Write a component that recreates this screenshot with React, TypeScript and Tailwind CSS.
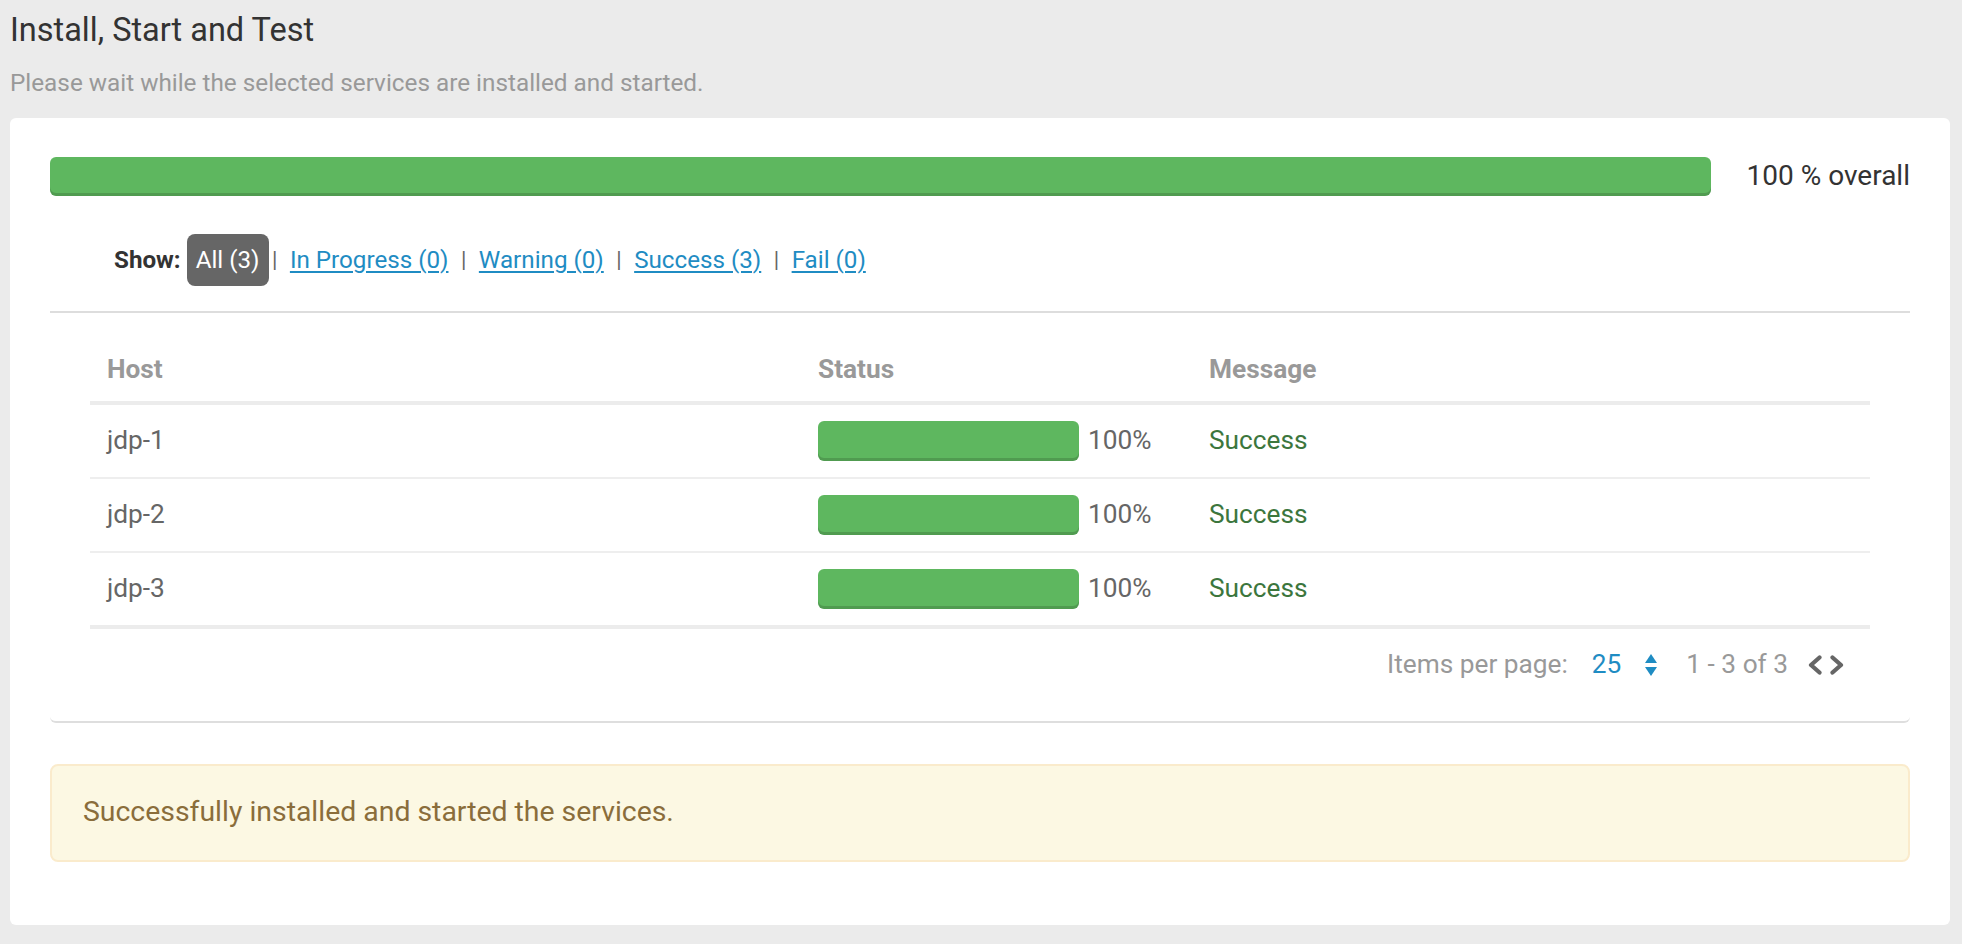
import React from "react";

const hosts = ["jdp-1", "jdp-2", "jdp-3"];

function SortIcon() {
  return (
    <svg width="12" height="22" viewBox="0 0 12 22" className="block">
      <path d="M6 0 L12 9 L0 9 Z" fill="#1f8cc3" />
      <path d="M0 13 L12 13 L6 22 Z" fill="#1f8cc3" />
    </svg>
  );
}

function Chevron({ dir }: { dir: "left" | "right" }) {
  return (
    <svg width="15" height="20" viewBox="0 0 15 20" className="block">
      {dir === "left" ? (
        <polyline points="12.5,2.5 4,10 12.5,17.5" fill="none" stroke="#666" strokeWidth="4.2" strokeLinecap="round" strokeLinejoin="round" />
      ) : (
        <polyline points="2.5,2.5 11,10 2.5,17.5" fill="none" stroke="#666" strokeWidth="4.2" strokeLinecap="round" strokeLinejoin="round" />
      )}
    </svg>
  );
}

export default function App() {
  const filters = [
    { label: "In Progress (0)" },
    { label: "Warning (0)" },
    { label: "Success (3)" },
    { label: "Fail (0)" },
  ];
  return (
    <div className="h-[944px] overflow-hidden w-full bg-[#ebebeb] font-[family-name:Roboto,sans-serif] pl-[10px] pr-[12px]">
      <h1 className="pt-[11.5px] text-[32.5px] leading-[36px] text-[#333] font-normal">Install, Start and Test</h1>
      <p className="mt-[20px] text-[24.3px] leading-[30px] text-[#999]">
        Please wait while the selected services are installed and started.
      </p>

      <div className="mt-[20px] bg-white rounded-[6px] px-[40px] pt-[39px] pb-[63px]">
        {/* overall */}
        <div className="flex items-center">
          <div className="flex-1 h-[39px] rounded-[6px] bg-[#5eb75f] shadow-[inset_0_-3px_0_rgba(0,0,0,0.15)]" />
          <div className="ml-[36px] text-[28px] leading-[38px] text-[#333]">100 % overall</div>
        </div>

        <div className="rounded-b-[6px] border-b-2 border-[#dedede]">
          {/* filters */}
          <div className="mt-[38px] pl-[64px] flex items-center h-[52px] text-[24.2px] leading-[30px]">
            <span className="font-bold text-[#333]">Show:</span>
            <span className="ml-[6px] h-[52px] flex items-center px-[9px] rounded-[8px] bg-[#666] text-white">All (3)</span>
            {filters.map((f) => (
              <React.Fragment key={f.label}>
                <span className="mx-[3.5px] text-[#666] text-[22px]">|</span>
                <span className="px-[9px] text-[#1f8cc3] underline underline-offset-[3px] decoration-[1.5px]">{f.label}</span>
              </React.Fragment>
            ))}
          </div>

          <div className="mt-[25px] h-[2px] bg-[#dddddd]" />

          {/* table */}
          <div className="mx-[40px] mt-[26px]">
            <div className="grid grid-cols-[714px_391px_1fr] h-[66px] items-center border-b-4 border-[#ececec] text-[26.25px] font-bold text-[#999]">
              <div className="pl-[17px] pr-[14px]">Host</div>
              <div className="px-[14px]">Status</div>
              <div className="px-[14px]">Message</div>
            </div>
            {hosts.map((h, i) => (
              <div
                key={h}
                className={
                  "grid grid-cols-[714px_391px_1fr] items-center text-[26.25px] " +
                  (i === hosts.length - 1 ? "border-b-4 h-[76px] border-[#ececec]" : "border-b-2 h-[74px] border-[#eeeeee]")
                }
              >
                <div className="pl-[17px] pr-[14px] text-[#666]">{h}</div>
                <div className="px-[14px] flex items-center">
                  <div className="w-[261px] h-[40px] rounded-[6px] bg-[#5eb75f] shadow-[inset_0_-3px_0_rgba(0,0,0,0.15)]" />
                  <span className="ml-[9px] text-[#666]">100%</span>
                </div>
                <div className="px-[14px] text-[#3c763d]">Success</div>
              </div>
            ))}

            {/* pagination */}
            <div className="h-[72px] mb-[20px] flex items-center justify-end pr-[25px] text-[26.25px] text-[#999]">
              <span>Items per page:</span>
              <span className="ml-[24px] text-[#1f8cc3]">25</span>
              <span className="ml-[24px]"><SortIcon /></span>
              <span className="ml-[29px]">1 - 3 of 3</span>
              <span className="ml-[19px]"><Chevron dir="left" /></span>
              <span className="ml-[8px]"><Chevron dir="right" /></span>
            </div>
          </div>
        </div>

        {/* alert */}
        <div className="mt-[41px] h-[98px] flex items-center rounded-[8px] border-2 border-[#faebcc] bg-[#fcf8e3] px-[31px] text-[28.4px] text-[#8a6d3b]">
          Successfully installed and started the services.
        </div>
      </div>
    </div>
  );
}
